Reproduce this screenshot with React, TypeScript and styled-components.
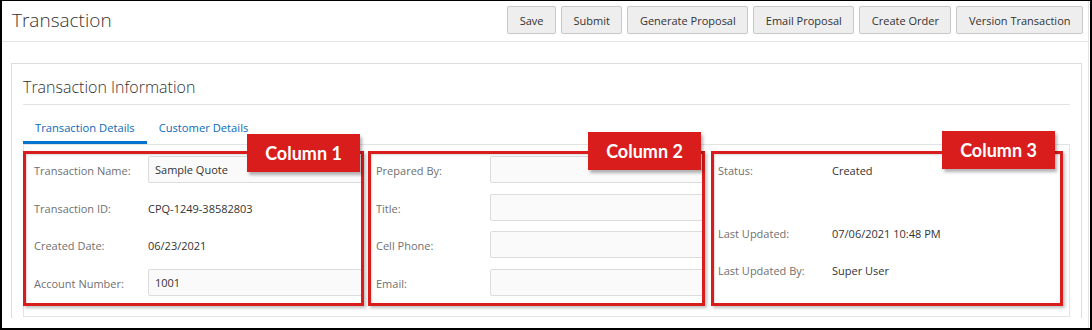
import { createGlobalStyle, styled } from "styled-components";

const GlobalStyle = createGlobalStyle`
  * {
    box-sizing: border-box;
  }

  body {
    margin: 0;
    background: #fff;
    font-family: "Open Sans", "Noto Sans", Arial, sans-serif;
    color: #333;
  }
`;

const Frame = styled.div`
  width: 1092px;
  height: 330px;
  border: 2px solid #000;
  border-top-width: 1px;
  padding-right: 1px;
  overflow: hidden;
`;

const Screen = styled.div`
  height: 100%;
  border-right: 1px solid #e3e3e3;
`;

const Header = styled.header`
  display: flex;
  align-items: center;
  justify-content: space-between;
  height: 41px;
  padding: 0 5px 2px 10px;
  border-bottom: 1px solid #e3e3e3;

  h1 {
    margin: 0;
    font-size: 19px;
    font-weight: 300;
    color: #333;
  }
`;

const Toolbar = styled.div`
  display: flex;
  gap: 5px;
`;

const Button = styled.button`
  height: 28px;
  padding: 0 11.5px;
  border: 1px solid #c8c8c8;
  border-radius: 2px;
  background: #eeeeee;
  font-family: inherit;
  font-size: 11px;
  color: #333;
`;

const Body = styled.main`
  padding: 21px 6px 0 9px;
`;

const Panel = styled.section`
  border: 1px solid #dedede;
  border-bottom: none;
  padding: 0 11px;
  height: 255px;

  h2 {
    margin: 0;
    padding: 11px 0 5px;
    line-height: 24px;
    font-size: 16px;
    font-weight: 300;
    color: #333;
    border-bottom: 1px solid #e3e3e3;
  }
`;

const Tabs = styled.nav`
  display: flex;
`;

const Tab = styled.div<{ $active?: boolean }>`
  margin-top: 14px;
  padding: 0 12px 4px;
  line-height: 18px;
  font-size: 11.2px;
  color: #0a6ab8;
  border-bottom: 3px solid ${(p) => (p.$active ? "#0572ce" : "transparent")};
`;

const Content = styled.div`
  position: relative;
  display: grid;
  grid-template-columns: repeat(3, 342px);
  height: 173px;
  padding: 11px 0 0 10px;
  border: 1px solid #e3e3e3;
`;

const Column = styled.div`
  display: flex;
  flex-direction: column;
  gap: 10.5px;
  padding-right: 14px;
`;

const Row = styled.div<{ $spaced?: boolean }>`
  display: flex;
  align-items: center;
  height: 27px;
  margin-top: ${(p) => (p.$spaced ? "25px" : "0")};
  font-size: 11px;
`;

const Label = styled.span`
  width: 114px;
  flex: none;
  padding-top: 2px;
  color: #707070;
`;

const Value = styled.span`
  padding-top: 2px;
  color: #333;
`;

const Input = styled.div`
  flex: 1;
  align-self: stretch;
  display: flex;
  align-items: center;
  padding: 0 6px;
  background: #fafafa;
  border: 1px solid #dcdcdc;
  border-radius: 2px;
  color: #333;
`;

// hand-drawn callouts laid over the form
const Callout = styled.div<{ $x: number; $y: number; $w: number; $h: number }>`
  position: absolute;
  left: ${(p) => p.$x}px;
  top: ${(p) => p.$y}px;
  width: ${(p) => p.$w}px;
  height: ${(p) => p.$h}px;
  border: 3px solid #d91c1c;
  box-shadow: 2px 2px 3px rgba(0, 0, 0, 0.25), inset 1px 1px 2px rgba(0, 0, 0, 0.15);
  pointer-events: none;
`;

const Tag = styled.div<{ $x: number; $y: number }>`
  position: absolute;
  left: ${(p) => p.$x}px;
  top: ${(p) => p.$y}px;
  width: 113px;
  height: 38px;
  display: flex;
  align-items: center;
  justify-content: center;
  background: #d91c1c;
  color: #fff;
  font-family: Lato, "Open Sans", sans-serif;
  font-weight: 700;
  font-size: 18px;
  box-shadow: 2px 3px 3px rgba(0, 0, 0, 0.3);
`;

const callouts = [
  { label: "Column 1", x: -1, y: 6, w: 341, h: 155, tx: 223, ty: -11 },
  { label: "Column 2", x: 344, y: 6, w: 337, h: 155, tx: 564, ty: -13 },
  { label: "Column 3", x: 687, y: 6, w: 352, h: 155, tx: 918, ty: -14 },
];

export default function App() {
  return (
    <>
      <GlobalStyle />
      <Frame>
        <Screen>
          <Header>
            <h1>Transaction</h1>
            <Toolbar>
              <Button>Save</Button>
              <Button>Submit</Button>
              <Button>Generate Proposal</Button>
              <Button>Email Proposal</Button>
              <Button>Create Order</Button>
              <Button>Version Transaction</Button>
            </Toolbar>
          </Header>
          <Body>
            <Panel>
              <h2>Transaction Information</h2>
              <Tabs>
                <Tab $active>Transaction Details</Tab>
                <Tab>Customer Details</Tab>
              </Tabs>
              <Content>
                <Column>
                  <Row>
                    <Label>Transaction Name:</Label>
                    <Input>Sample Quote</Input>
                  </Row>
                  <Row>
                    <Label>Transaction ID:</Label>
                    <Value>CPQ-1249-38582803</Value>
                  </Row>
                  <Row>
                    <Label>Created Date:</Label>
                    <Value>06/23/2021</Value>
                  </Row>
                  <Row>
                    <Label>Account Number:</Label>
                    <Input>1001</Input>
                  </Row>
                </Column>
                <Column>
                  <Row>
                    <Label>Prepared By:</Label>
                    <Input />
                  </Row>
                  <Row>
                    <Label>Title:</Label>
                    <Input />
                  </Row>
                  <Row>
                    <Label>Cell Phone:</Label>
                    <Input />
                  </Row>
                  <Row>
                    <Label>Email:</Label>
                    <Input />
                  </Row>
                </Column>
                <Column>
                  <Row>
                    <Label>Status:</Label>
                    <Value>Created</Value>
                  </Row>
                  <Row $spaced>
                    <Label>Last Updated:</Label>
                    <Value>07/06/2021 10:48 PM</Value>
                  </Row>
                  <Row>
                    <Label>Last Updated By:</Label>
                    <Value>Super User</Value>
                  </Row>
                </Column>
                {callouts.map((c) => (
                  <div key={c.label}>
                    <Callout $x={c.x} $y={c.y} $w={c.w} $h={c.h} />
                    <Tag $x={c.tx} $y={c.ty}>
                      {c.label}
                    </Tag>
                  </div>
                ))}
              </Content>
            </Panel>
          </Body>
        </Screen>
      </Frame>
    </>
  );
}
